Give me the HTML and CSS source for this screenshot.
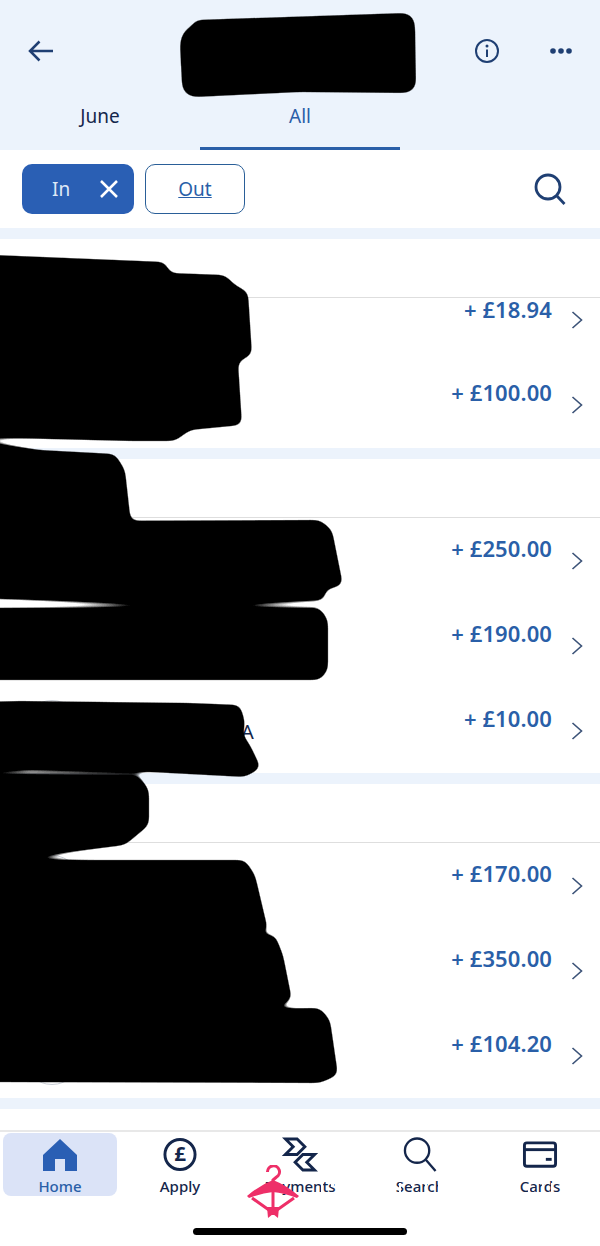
FILE: index.html
```html
<!DOCTYPE html>
<html lang="en">
<head>
    <meta charset="UTF-8">
    <meta name="viewport" content="width=device-width, initial-scale=1.0">
    <title>Transactions</title>
    <link rel="stylesheet" href="styles.css">
</head>
<body>
    <div class="top">
        <div class="top-bar">
            <svg class="back-icon" width="26" height="22" viewBox="0 0 26 22"><path d="M25 11H2M11.500 1.500L2 11l9.500 9.500"/></svg>
            <div class="top-actions">
                <svg class="info-icon" width="24" height="24" viewBox="0 0 24 24"><circle cx="12" cy="12" r="11"/><path d="M12 10.500V18"/><circle class="dot" cx="12" cy="7" r="1.500"/></svg>
                <svg class="more-icon" width="22" height="6" viewBox="0 0 22 6"><circle cx="3" cy="3" r="2.800"/><circle cx="11" cy="3" r="2.800"/><circle cx="19" cy="3" r="2.800"/></svg>
            </div>
        </div>
        <div class="tabs">
            <div class="tab">June</div>
            <div class="tab tab-active">All</div>
        </div>
    </div>

    <div class="filters">
        <button class="chip chip-on">
            <span>In</span>
            <svg width="20" height="20" viewBox="0 0 20 20"><path d="M2 2l16 16M18 2L2 18"/></svg>
        </button>
        <button class="chip chip-off">Out</button>
        <svg class="filter-search" width="32" height="32" viewBox="0 0 32 32"><circle cx="14" cy="14" r="12"/><path d="M22.500 22.500L30.500 31"/></svg>
    </div>

    <div class="strip"></div>
    <div class="section-head"></div>
    <div class="row row-short">
        <div class="avatar"></div>
        <div class="name"></div>
        <div class="amount">+ £18.94</div>
        <svg class="chev" width="12" height="18" viewBox="0 0 12 18"><path d="M1.500 1l9 8-9 8"/></svg>
    </div>
    <div class="row row-tall">
        <div class="avatar"></div>
        <div class="name"></div>
        <div class="amount">+ £100.00</div>
        <svg class="chev" width="12" height="18" viewBox="0 0 12 18"><path d="M1.500 1l9 8-9 8"/></svg>
    </div>

    <div class="strip"></div>
    <div class="section-head"></div>
    <div class="row">
        <div class="avatar"></div>
        <div class="name"></div>
        <div class="amount">+ £250.00</div>
        <svg class="chev" width="12" height="18" viewBox="0 0 12 18"><path d="M1.500 1l9 8-9 8"/></svg>
    </div>
    <div class="row">
        <div class="avatar"></div>
        <div class="name"></div>
        <div class="amount">+ £190.00</div>
        <svg class="chev" width="12" height="18" viewBox="0 0 12 18"><path d="M1.500 1l9 8-9 8"/></svg>
    </div>
    <div class="row">
        <div class="avatar"></div>
        <div class="name">A</div>
        <div class="amount">+ £10.00</div>
        <svg class="chev" width="12" height="18" viewBox="0 0 12 18"><path d="M1.500 1l9 8-9 8"/></svg>
    </div>

    <div class="strip"></div>
    <div class="section-head"></div>
    <div class="row">
        <div class="avatar"></div>
        <div class="name"></div>
        <div class="amount">+ £170.00</div>
        <svg class="chev" width="12" height="18" viewBox="0 0 12 18"><path d="M1.500 1l9 8-9 8"/></svg>
    </div>
    <div class="row">
        <div class="avatar"></div>
        <div class="name"></div>
        <div class="amount">+ £350.00</div>
        <svg class="chev" width="12" height="18" viewBox="0 0 12 18"><path d="M1.500 1l9 8-9 8"/></svg>
    </div>
    <div class="row">
        <div class="avatar"></div>
        <div class="name"></div>
        <div class="amount">+ £104.20</div>
        <svg class="chev" width="12" height="18" viewBox="0 0 12 18"><path d="M1.500 1l9 8-9 8"/></svg>
    </div>

    <div class="strip"></div>
    <div class="spacer"></div>

    <div class="nav">
        <div class="nav-item nav-home">
            <svg width="36" height="34" viewBox="0 0 36 34"><path class="solid" d="M18 1L35 17V33H23V21H13V33H1V17Z"/></svg>
            <span>Home</span>
        </div>
        <div class="nav-item">
            <svg width="36" height="36" viewBox="0 0 36 36"><circle cx="18" cy="18" r="15.500"/><text x="18" y="25" text-anchor="middle" class="pound">£</text></svg>
            <span>Apply</span>
        </div>
        <div class="nav-item">
            <svg width="36" height="36" viewBox="0 0 36 36"><path d="M3 2H15L23 10L15 18H3L11 10ZM33 18H21L13 26L21 34H33L25 26Z"/></svg>
            <span>Payments</span>
        </div>
        <div class="nav-item nav-thin">
            <svg width="36" height="36" viewBox="0 0 36 36"><circle cx="15" cy="14" r="12.500"/><path d="M24 23.500L34 35"/></svg>
            <span>Search</span>
        </div>
        <div class="nav-item">
            <svg width="36" height="36" viewBox="0 0 36 36"><rect x="2" y="6" width="32" height="24" rx="2.500"/><path d="M2 13H34"/><path d="M24 23H30"/></svg>
            <span>Cards</span>
        </div>
    </div>
    <div class="home-bar"></div>

    <!-- marks drawn over the screenshot -->
    <svg class="scribble" width="600" height="1246" viewBox="0 0 600 1246">
        <defs>
            <filter id="marker" filterUnits="userSpaceOnUse" x="-40" y="0" width="680" height="1246">
                <feGaussianBlur stdDeviation="4"/>
                <feComponentTransfer>
                    <feFuncA type="linear" slope="9" intercept="-4"/>
                </feComponentTransfer>
            </filter>
        </defs>
        <g filter="url(#marker)">
            <path d="M195 20L405 13Q414 14 415 25L416 85Q414 92 405 93L300 92L195 97Q183 96 182 85L180 45Q181 30 192 26Z"/>
            <path d="M-30 254L165 262L170 273L225 275L235 285L248 292L252 355L245 358L238 362L242 425L190 430L175 441L130 441L-30 437Z"/>
            <path d="M-30 440L40 450L115 454L125 470L131 524L30 524L-30 528Z"/>
            <path d="M-30 532L30 521L320 520L332 530L343 585L325 590L325 600L200 605L-30 598Z"/>
            <path d="M-30 608L320 608L328 620L328 670L320 680L-30 680Z"/>
            <path d="M-30 702L20 701L190 703L240 705L245 722L243 735L250 745L261 768L245 777L150 772L30 769L-30 772Z"/>
            <path d="M-30 776L30 775L90 776L140 777L149 790L149 825L125 845L30 857L-30 855Z"/>
            <path d="M-30 862L20 860L245 860L255 875L268 930L250 936L-30 940Z"/>
            <path d="M-30 938L275 935L283 955L292 1000L270 1008L-30 1012Z"/>
            <path d="M-30 1008L100 1010L320 1008L330 1020L338 1075L320 1083L-30 1082Z"/>
        </g>
    </svg>

    <!-- scratches across the tab labels -->
    <svg class="scratches" width="600" height="1246" viewBox="0 0 600 1246">
        <rect x="321" y="1180" width="2" height="14"/>
        <rect x="331" y="1179" width="3" height="8"/>
        <rect x="399" y="1183" width="2" height="12"/>
        <rect x="411" y="1179" width="2" height="7"/>
        <rect x="425" y="1179" width="2" height="15"/>
        <rect x="438" y="1178" width="6" height="18"/>
        <rect x="528" y="1186" width="2" height="9"/>
        <rect x="542" y="1179" width="2" height="8"/>
        <rect x="551" y="1183" width="2" height="10"/>
    </svg>

    <!-- sticker on top of the tab bar -->
    <svg class="hanger" width="54" height="54" viewBox="0 0 54 54">
        <path class="hanger-line" d="M21.500 7a6 6 0 1 1 9 5l-3.500 3V50"/>
        <path class="hanger-arm" d="M1 31Q14 20 27 15Q40 20 53 31L51 33Q38 28 27 27Q16 28 3 33Z"/>
        <path class="hanger-line" d="M6 33L23 45M48 33L31 45"/>
        <path class="hanger-arm" d="M21 42H33L32 53L27 49L22 53Z"/>
    </svg>
</body>
</html>
```

FILE: styles.css
```css
body {
    font-family: "Noto Sans", sans-serif;
    margin: 0;
    padding: 0;
    width: 600px;
    height: 1246px;
    position: relative;
    overflow: hidden;
    background-color: #ffffff;
    color: #14264b;
}
svg {
    fill: none;
    stroke: #14264b;
}
.top {
    height: 150px;
    background-color: #ecf3fc;
    box-sizing: border-box;
}
.top-bar {
    height: 102px;
    display: flex;
    justify-content: space-between;
    align-items: center;
    padding-left: 28px;
    padding-right: 28px;
}
.back-icon {
    stroke: #1f3f73;
    stroke-width: 2.500;
}
.top-actions {
    display: flex;
    align-items: center;
    gap: 51px;
}
.info-icon {
    stroke: #1f3f73;
    stroke-width: 2;
}
.info-icon .dot {
    fill: #1f3f73;
    stroke: none;
}
.more-icon {
    fill: #1f3f73;
    stroke: none;
}
.tabs {
    display: flex;
    height: 48px;
}
.tab {
    width: 200px;
    height: 48px;
    box-sizing: border-box;
    text-align: center;
    font-size: 19px;
    line-height: 28px;
}
.tab-active {
    color: #2a5fa8;
    border-bottom: 3px solid #2a5fa8;
}
.filters {
    height: 78px;
    box-sizing: border-box;
    display: flex;
    align-items: center;
    padding: 0 34px 0 22px;
    gap: 11px;
}
.chip {
    font-family: "Noto Sans", sans-serif;
    font-size: 19px;
    height: 50px;
    border-radius: 10px;
    box-sizing: border-box;
}
.chip-on {
    width: 112px;
    background-color: #2a5fb4;
    color: #dfe8f6;
    border: none;
    display: flex;
    align-items: center;
    justify-content: space-between;
    padding: 0 15px 0 30px;
}
.chip-on svg {
    stroke: #ffffff;
    stroke-width: 2.500;
}
.chip-off {
    width: 100px;
    background-color: #ffffff;
    color: #2a5fa8;
    border: 1.500px solid #2a5f98;
    text-decoration: underline;
}
.filter-search {
    margin-left: auto;
    stroke: #1f3f73;
    stroke-width: 2.800;
}
.strip {
    height: 11px;
    background-color: #ecf3fc;
}
.section-head {
    height: 58px;
    border-bottom: 1px solid #dedede;
}
.spacer {
    height: 21px;
}
.row {
    height: 85px;
    display: flex;
    align-items: flex-start;
    padding: 0 17px 0 22px;
    box-sizing: border-box;
}
.row-short {
    height: 64px;
}
.row-tall {
    height: 86px;
}
.avatar {
    width: 60px;
    height: 60px;
    margin-top: 12px;
    box-sizing: border-box;
    border: 1px solid #c9ced6;
    border-radius: 50%;
    flex-shrink: 0;
}
.name {
    flex: 1;
    margin-top: 29px;
    padding-left: 159px;
    font-size: 20px;
    font-weight: 400;
    line-height: 30px;
}
.amount {
    margin-top: 15px;
    font-size: 22px;
    font-weight: 600;
    line-height: 30px;
    letter-spacing: 0.100px;
    color: #2a5fa8;
}
.chev {
    margin-top: 34px;
    margin-left: 19px;
    stroke: #3c5378;
    stroke-width: 1.600;
}
.row-short .avatar {
    margin-top: 2px;
}
.row-short .amount {
    margin-top: -4px;
}
.row-short .chev {
    margin-top: 13px;
}
.nav {
    height: 116px;
    box-sizing: border-box;
    border-top: 2px solid #e8e8e8;
    display: grid;
    grid-template-columns: repeat(5, 120px);
    align-items: start;
}
.nav-item {
    height: 63px;
    margin: 1px 3px 0;
    border-radius: 8px;
    display: flex;
    flex-direction: column;
    align-items: center;
    font-size: 15px;
    font-weight: 500;
    line-height: 20px;
}
.nav-item svg {
    height: 36px;
    margin-top: 4px;
    margin-bottom: 4px;
    stroke-width: 3;
}
.nav-thin svg {
    stroke-width: 2.400;
}
.nav-home {
    background-color: #dbe3f7;
    color: #2a5fa8;
}
.nav-home svg {
    margin-top: 5px;
}
.nav-home .solid {
    fill: #2a5fb4;
    stroke: none;
}
.pound {
    font-family: "Noto Sans", sans-serif;
    font-size: 21px;
    font-weight: 700;
    fill: #14264b;
    stroke: none;
}
.home-bar {
    position: absolute;
    left: 193px;
    top: 1228px;
    width: 214px;
    height: 7px;
    border-radius: 4px;
    background-color: #000000;
}
.scribble {
    position: absolute;
    left: 0;
    top: 0;
}
.scribble path {
    fill: #000000;
    stroke: none;
}
.scratches {
    position: absolute;
    left: 0;
    top: 0;
}
.scratches rect {
    fill: #ffffff;
    stroke: none;
}
.hanger {
    position: absolute;
    left: 246px;
    top: 1165px;
}
.hanger-line {
    stroke: #ee2f68;
    stroke-width: 3;
}
.hanger-arm {
    fill: #ee2f68;
    stroke: none;
}
```
